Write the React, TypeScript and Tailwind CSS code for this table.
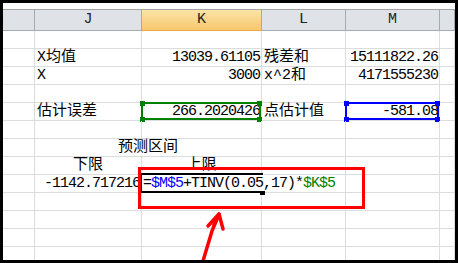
import React from "react";

const font = "font-['Liberation_Mono','Noto_Sans_CJK_SC',monospace]";
const num = "text-right pr-[1px] tracking-[-1px]";
const label = "pl-[2px]";

interface CellProps {
  className?: string;
  children?: React.ReactNode;
}

const Cell: React.FC<CellProps> = ({ className = "", children }) => (
  <div
    className={`relative h-[18px] border-r border-b border-[#dadcdd] text-[15px] leading-[17px] whitespace-nowrap text-black ${className}`}
  >
    {children}
  </div>
);

const Row: React.FC<{ children?: React.ReactNode }> = ({ children }) => (
  <div className="grid grid-cols-[32px_107px_120px_84px_94px_15px]">{children}</div>
);

const Empty: React.FC = () => (
  <Row>
    <Cell />
    <Cell />
    <Cell />
    <Cell />
    <Cell />
    <Cell />
  </Row>
);

// little squares on the corners of a highlighted range
const Handles: React.FC<{ color: string }> = ({ color }) => (
  <>
    <span className={`absolute left-[-2px] top-[-2px] w-[5px] h-[5px] ${color}`} />
    <span className={`absolute right-[-1px] top-[-2px] w-[5px] h-[5px] ${color}`} />
    <span className={`absolute left-[-2px] bottom-[-2px] w-[5px] h-[5px] ${color}`} />
    <span className={`absolute right-[-1px] bottom-[-2px] w-[5px] h-[5px] ${color}`} />
  </>
);

const HeadCell: React.FC<CellProps> = ({ className = "", children }) => (
  <div
    className={`h-[21px] border-r border-b border-[#a4abb3] bg-[#dfe3e8] text-center text-[15px] leading-[20px] text-[#222] ${className}`}
  >
    {children}
  </div>
);

export default function App() {
  return (
    <div className={`w-[458px] h-[263px] bg-black p-[3px] ${font}`}>
      <div className="relative w-[452px] h-[257px] bg-white overflow-hidden">
        <div className="h-[7px] border-b border-[#a3a3a3]" />
        <Row>
          <HeadCell />
          <HeadCell>J</HeadCell>
          <HeadCell className="bg-gradient-to-b from-[#fce3a6] to-[#f6c86c] border-b-[#eeaa44]">K</HeadCell>
          <HeadCell>L</HeadCell>
          <HeadCell>M</HeadCell>
          <HeadCell />
        </Row>

        <Empty />
        <Row>
          <Cell />
          <Cell className={label}>X均值</Cell>
          <Cell className={num}>13039.61105</Cell>
          <Cell className={label}>残差和</Cell>
          <Cell className={num}>15111822.26</Cell>
          <Cell />
        </Row>
        <Row>
          <Cell />
          <Cell className={label}>X</Cell>
          <Cell className={num}>3000</Cell>
          <Cell className={label}>x^2和</Cell>
          <Cell className={num}>4171555230</Cell>
          <Cell />
        </Row>
        <Empty />
        <Row>
          <Cell />
          <Cell className={label}>估计误差</Cell>
          <Cell className={num}>
            266.2020426
            <span className="absolute -left-px -top-px right-0 bottom-0 border-2 border-[#008000]" />
            <Handles color="bg-[#008000]" />
          </Cell>
          <Cell className={label}>点估计值</Cell>
          <Cell className={num}>
            -581.08
            <span className="absolute -left-px -top-px right-0 bottom-0 border-2 border-[#0000ff]" />
            <Handles color="bg-[#0000ff]" />
          </Cell>
          <Cell />
        </Row>
        <Empty />
        <Row>
          <Cell />
          <Cell className="col-span-2 text-center">预测区间</Cell>
          <Cell />
          <Cell />
          <Cell />
        </Row>
        <Row>
          <Cell />
          <Cell className="text-center">下限</Cell>
          <Cell className="text-center">上限</Cell>
          <Cell />
          <Cell />
          <Cell />
        </Row>
        <Row>
          <Cell />
          <Cell className={num}>-1142.717216</Cell>
          <Cell className="z-10">
            <span className="absolute left-0 top-0 h-[17px] pl-[1px] pr-[2px] bg-white tracking-[-1px]">
              =<span className="text-[#0000ff]">$M$5</span>+TINV(0.05,17)*
              <span className="text-[#008000]">$K$5</span>
            </span>
            <span className="absolute left-[-2px] top-[-2px] right-[-2px] bottom-[-1px] border-l-2 border-t-2 border-b-2 border-black" />
            <span className="absolute left-[118px] top-[16px] w-[5px] h-[4px] bg-black" />
          </Cell>
          <Cell />
          <Cell />
          <Cell />
        </Row>
        <Empty />
        <Empty />
        <Empty />
        <Empty />

        {/* annotation: red box + arrow */}
        <div className="absolute left-[135px] top-[164px] w-[227px] h-[42px] border-[3px] border-[#ff0000] z-20" />
        <svg className="absolute left-0 top-0 z-20" width="452" height="257" viewBox="0 0 452 257">
          <g stroke="#ff0000" strokeWidth="3.5" strokeLinecap="round" strokeLinejoin="round" fill="none">
            <path d="M200 258 L209 228 L216 211" />
            <path d="M205 223 L216 211 L220 226" />
            <path d="M211 222 L214 216" />
          </g>
        </svg>
      </div>
    </div>
  );
}
